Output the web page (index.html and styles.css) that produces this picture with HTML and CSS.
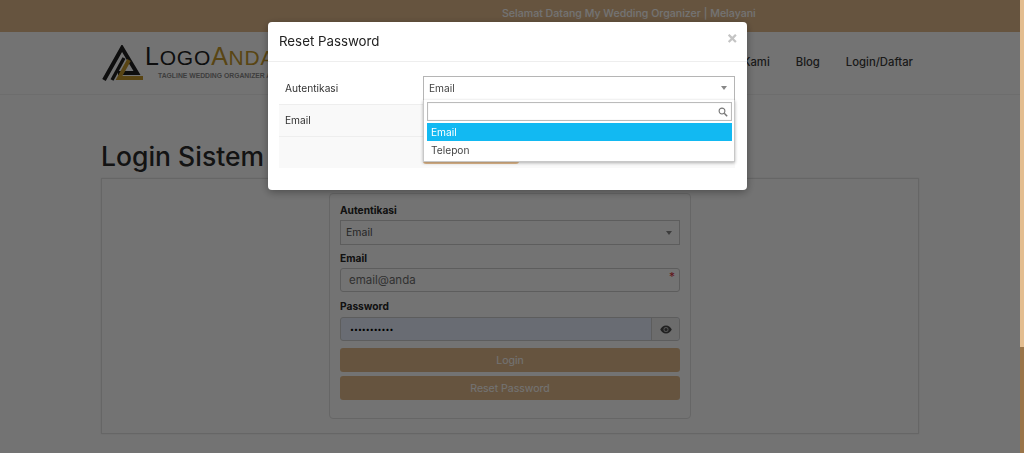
FILE: index.html
```html
<!DOCTYPE html>
<html lang="id">
<head>
<meta charset="utf-8">
<title>Login Sistem</title>
<link rel="stylesheet" href="styles.css">
</head>
<body>
<div class="page">
  <div class="topbar"><span>Selamat Datang My Wedding Organizer | Melayani</span></div>
  <header class="header">
    <div class="logo">
      <svg class="logo-mark" width="42" height="36" viewBox="0 0 42 36">
        <path d="M2 35 L20 3 L35 28 H16" fill="none" stroke="#1f1f1f" stroke-width="4"/>
        <path d="M10 35 L22 13" fill="none" stroke="#1f1f1f" stroke-width="3.400"/>
        <path d="M27 15 L17 33 H41" fill="none" stroke="#c69a2d" stroke-width="4"/>
      </svg>
      <div class="logo-text">
        <div class="logo-name"><span class="logo-big">L</span>OGO<span class="logo-gold"><span class="logo-big">A</span>NDA</span></div>
        <div class="logo-tag">TAGLINE WEDDING ORGANIZER ANDA</div>
      </div>
    </div>
    <nav class="nav">
      <a>Tentang Kami</a>
      <a>Blog</a>
      <a>Login/Daftar</a>
    </nav>
  </header>
  <main class="main">
    <h1 class="title">Login Sistem</h1>
    <section class="outer">
      <form class="login">
        <label class="lbl">Autentikasi</label>
        <div class="field select-field"><span>Email</span><i class="caret"></i></div>
        <label class="lbl">Email</label>
        <div class="field input-field"><span class="placeholder">email@anda</span><b class="req">*</b></div>
        <label class="lbl lbl-pass">Password</label>
        <div class="field pass-field">
          <span class="dots">•••••••••••</span>
          <span class="eye">
            <svg width="12" height="9" viewBox="0 0 24 18"><path d="M12 1C6.500 1 2.500 4.800 0.500 9c2 4.200 6 8 11.500 8s9.500-3.800 11.500-8C21.500 4.800 17.500 1 12 1z" fill="#4a4a4a"/><circle cx="12" cy="9" r="5" fill="#bbb"/><circle cx="12" cy="9" r="3" fill="#4a4a4a"/></svg>
          </span>
        </div>
        <button type="button" class="btn">Login</button>
        <button type="button" class="btn">Reset Password</button>
      </form>
    </section>
  </main>
</div>
<div class="scrollbar"><div class="thumb"></div></div>
<div class="backdrop"></div>
<div class="modal">
  <div class="modal-head">
    <h2 class="modal-title">Reset Password</h2>
    <span class="close">×</span>
  </div>
  <div class="modal-body">
    <div class="row">
      <div class="cell-label">Autentikasi</div>
      <div class="cell-value"><div class="mselect"><span>Email</span><i class="caret"></i></div></div>
    </div>
    <div class="row alt">
      <div class="cell-label">Email</div>
      <div class="cell-value"></div>
    </div>
    <div class="row alt last">
      <div class="cell-label"></div>
      <div class="cell-value"><div class="mbtn"></div></div>
    </div>
  </div>
  <div class="dropdown">
    <div class="search">
      <svg width="10" height="10" viewBox="0 0 12 12"><circle cx="4.800" cy="4.800" r="3.500" fill="none" stroke="#777" stroke-width="1.300"/><path d="M7.500 7.500L11 11" stroke="#777" stroke-width="1.800"/></svg>
    </div>
    <div class="opt active">Email</div>
    <div class="opt">Telepon</div>
  </div>
</div>
</body>
</html>
```
FILE: styles.css
```css
* { box-sizing: border-box; }
html, body { margin: 0; height: 453px; overflow: hidden; }
body {
  display: flex;
  font-family: "Inter", "Open Sans", sans-serif;
  background: #fff;
  color: #212529;
}
.page { width: 1020px; height: 453px; display: flex; flex-direction: column; }
.topbar {
  height: 32px;
  background: #e3bb8d;
  color: #fff;
  font-size: 10.600px;
  font-weight: 500;
  line-height: 27px;
  padding-left: 502px;
  white-space: nowrap;
}
.header {
  height: 63px;
  border-bottom: 1px solid #f2f2f2;
  display: flex;
  justify-content: space-between;
  padding: 12px 107px 0 102px;
}
.logo { display: flex; align-items: flex-start; }
.logo-mark { margin-top: 1px; }
.logo-text { margin-left: 1px; }
.logo-name {
  font-family: "Liberation Sans", sans-serif;
  font-size: 21px;
  line-height: 24px;
  color: #1f1f1f;
  letter-spacing: 0.800px;
  margin-top: 0;
  white-space: nowrap;
}
.logo-big { font-size: 25px; }
.logo-gold { color: #c69a2d; }
.logo-tag {
  font-family: "Liberation Sans", sans-serif;
  font-size: 6.800px;
  font-weight: 700;
  color: #8a8a8a;
  margin-left: 13px;
  margin-top: 1px;
  line-height: 9px;
  white-space: nowrap;
}
.nav { display: flex; gap: 26px; padding-top: 8px; }
.nav a {
  font-size: 11.300px;
  font-weight: 500;
  line-height: 20px;
  color: #3a3a3a;
}
.main { padding: 0 101px; flex: 1; }
.title {
  margin: 43px 0 4px;
  font-size: 26.500px;
  font-weight: 500;
  line-height: 36px;
  color: #2b2b2b;
}
.outer {
  height: 256px;
  border: 1px solid #e2e2e2;
  box-shadow: 0 0 2px rgba(0,0,0,.08);
  padding-top: 14px;
  display: flex;
  justify-content: center;
}
.login {
  width: 362px;
  height: 226px;
  border: 1px solid #e2e2e2;
  border-radius: 4px;
  padding: 10px 10px 0;
  display: flex;
  flex-direction: column;
}
.lbl {
  font-size: 10.200px;
  font-weight: 700;
  line-height: 13px;
  color: #262626;
  margin-bottom: 3px;
}
.lbl-pass { margin-bottom: 4px; }
.field {
  height: 25px;
  border: 1px solid #cfcfcf;
  display: flex;
  align-items: center;
  font-size: 10.500px;
  color: #555;
  margin-bottom: 7px;
  position: relative;
}
.select-field { padding: 0 5px; justify-content: space-between; }
.caret {
  width: 0;
  height: 0;
  border: 3px solid transparent;
  border-top: 4px solid #888;
  border-bottom: 0;
  margin-right: 2px;
}
.input-field { height: 24px; margin-bottom: 8px; border-radius: 3px; padding: 0 8px; }
.placeholder { font-size: 11.500px; color: #6e6e6e; }
.req { position: absolute; right: 4px; top: 2px; color: #d9333f; font-size: 12px; font-weight: 400; line-height: 12px; }
.pass-field { height: 24px; background: #e8f0fe; border-radius: 3px; padding-left: 9px; }
.dots { font-size: 7px; color: #000; }
.eye {
  margin-left: auto;
  width: 28px;
  height: 22px;
  background: #f0f0f0;
  border-left: 1px solid #cfcfcf;
  border-radius: 0 3px 3px 0;
  display: flex;
  align-items: center;
  justify-content: center;
}
.btn {
  height: 24px;
  border: 0;
  border-radius: 3px;
  background: #e3bb8d;
  color: #fff;
  font-family: inherit;
  font-size: 10.500px;
  margin-bottom: 4px;
  padding: 0;
}
.scrollbar { width: 4px; height: 453px; background: #9a7549; position: relative; z-index: 3; }
.thumb { height: 347px; background: #e3bd8f; }
.backdrop {
  position: fixed;
  left: 0;
  top: 0;
  width: 1020px;
  height: 453px;
  background: rgba(0,0,0,.55);
}
.modal {
  position: fixed;
  left: 268px;
  top: 22px;
  width: 479px;
  height: 168px;
  background: #fff;
  border-radius: 4px;
  box-shadow: 0 2px 8px rgba(0,0,0,.35);
  padding: 0 12px 0 11px;
}
.modal-head {
  height: 40px;
  margin: 0 -12px 0 -11px;
  padding: 0 11px 2px 11px;
  border-bottom: 1px solid #eee;
  display: flex;
  justify-content: space-between;
  align-items: center;
}
.modal-title { margin: 0; font-size: 13.300px; font-weight: 400; color: #222; }
.close { font-size: 17px; font-weight: 700; color: #c4c4c4; margin-top: -5px; margin-right: -2px; }
.modal-body { display: flex; flex-direction: column; }
.row { display: flex; height: 43px; border-bottom: 1px solid #eee; }
.row.alt { background: #f9f9f9; height: 32px; }
.row.last { height: 31px; border-bottom: 0; }
.cell-label { width: 144px; padding: 0 6px; font-size: 10.200px; color: #333; display: flex; align-items: center; }
.row:first-child .cell-label { padding-top: 10px; }
.row.alt .cell-label { padding-bottom: 2px; }
.cell-value { flex: 1; position: relative; }
.mselect {
  margin-top: 14px;
  height: 25px;
  border: 1px solid #b5b5b5;
  display: flex;
  align-items: center;
  justify-content: space-between;
  padding: 0 5px 2px;
  font-size: 10.200px;
  color: #444;
}
.mbtn { position: absolute; left: 0; top: 0; width: 96px; height: 27px; background: #e3bb8d; border-radius: 3px; }
.dropdown {
  position: absolute;
  left: 155px;
  top: 78px;
  width: 312px;
  height: 62px;
  background: #fff;
  border: 1px solid #c8c8c8;
  border-top: 0;
  box-shadow: 0 1px 3px rgba(0,0,0,.3);
  padding: 2px 2px 0 3px;
}
.search {
  height: 19px;
  border: 1px solid #bbb;
  box-shadow: inset 0 0 1px rgba(0,0,0,.2);
  display: flex;
  align-items: center;
  justify-content: flex-end;
  padding-right: 3px;
  margin-bottom: 2px;
}
.opt { height: 18px; line-height: 18px; padding-left: 4px; font-size: 10.200px; color: #444; }
.opt.active { background: #12b9f2; color: #fff; }
```
